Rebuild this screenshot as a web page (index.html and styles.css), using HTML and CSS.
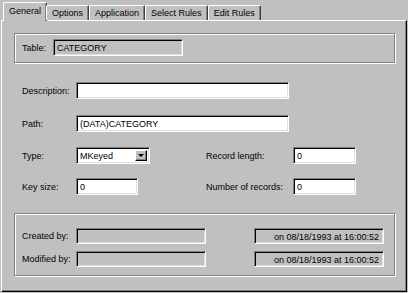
FILE: index.html
```html
<!doctype html>
<html>
<head>
    <title>Table properties</title>
    <link rel="stylesheet" href="styles.css">
</head>
<body>
<div class="dialog">
    <!-- tab strip -->
    <div class="tabs">
        <div class="tab tab-active">General</div>
        <div class="tab">Options</div>
        <div class="tab">Application</div>
        <div class="tab">Select Rules</div>
        <div class="tab">Edit Rules</div>
    </div>

    <div class="panel">
        <div class="group group-table">
            <div class="row">
                <label class="lbl lbl-short">Table:</label>
                <div class="field field-ro field-table">CATEGORY</div>
            </div>
        </div>

        <div class="form">
            <div class="row row-desc">
                <label class="lbl">Description:</label>
                <div class="field field-wide"></div>
            </div>
            <div class="row row-path">
                <label class="lbl">Path:</label>
                <div class="field field-wide">(DATA)CATEGORY</div>
            </div>
            <div class="row row-type">
                <div class="col-left">
                    <label class="lbl">Type:</label>
                    <div class="field combo">
                        <span class="combo-text">MKeyed</span>
                        <span class="combo-btn"><span class="arrow"></span></span>
                    </div>
                </div>
                <label class="lbl lbl-right">Record length:</label>
                <div class="field field-num">0</div>
            </div>
            <div class="row row-key">
                <div class="col-left">
                    <label class="lbl">Key size:</label>
                    <div class="field field-key">0</div>
                </div>
                <label class="lbl lbl-right">Number of records:</label>
                <div class="field field-num">0</div>
            </div>
        </div>

        <div class="group group-audit">
            <div class="row row-created">
                <label class="lbl">Created by:</label>
                <div class="field field-ro field-user"></div>
                <div class="field field-ro field-date">on 08/18/1993 at 16:00:52</div>
            </div>
            <div class="row row-modified">
                <label class="lbl">Modified by:</label>
                <div class="field field-ro field-user"></div>
                <div class="field field-ro field-date">on 08/18/1993 at 16:00:52</div>
            </div>
        </div>
    </div>
</div>
</body>
</html>
```

FILE: styles.css
```css
* { margin: 0; padding: 0; box-sizing: border-box; }
body { background-color: #c0c0c0; font-family: "Liberation Sans", Arial, sans-serif; font-size: 9px; color: #000; }

.dialog { padding: 2px 1px 0 1px; width: 408px; }

/* tabs */
.tabs { display: flex; align-items: flex-end; height: 18px; padding-left: 2px; position: relative; z-index: 1; }
.tab { height: 15px; padding: 2px 5px 0 5px; border: 1px solid #fff; border-right-color: #404040; border-bottom: none; box-shadow: inset -1px 0 #808080; border-radius: 2px 2px 0 0; white-space: nowrap; }
.tab-active { padding: 3px 5px 0 5px; margin-right: -1px; background-color: #c0c0c0; margin-bottom: -1px; height: 19px; }

/* main panel */
.panel { height: 272px; border: 1px solid #fff; border-right-color: #000; border-bottom-color: #000; box-shadow: inset -1px -1px #808080; padding: 12px 11px 0 12px; display: flex; flex-direction: column; }

.group { border: 1px solid #808080; box-shadow: inset 1px 1px #fff, 1px 1px #fff; width: 381px; }
.group-table { height: 30px; padding: 5px 0 0 7px; }
.group-audit { height: 63px; margin-top: 18px; padding: 14px 0 0 7px; }

.form { padding-left: 8px; }
.row { display: flex; align-items: center; height: 17px; }
.row-desc { margin-top: 19px; }
.row-path { margin-top: 16px; }
.row-type { margin-top: 15px; }
.row-key { margin-top: 14px; }
.row-created { height: 16px; }
.row-modified { height: 16px; margin-top: 7px; }

.lbl { width: 54px; white-space: nowrap; }
.lbl-short { width: 31px; }
.lbl-right { width: 87px; }
.col-left { display: flex; align-items: center; width: 184px; }

/* sunken fields */
.field { height: 17px; border: 1px solid; border-color: #808080 #fff #fff #808080; box-shadow: inset 1px 1px #000, inset -1px -1px #dfdfdf; background-color: #fff; padding: 3px 0 0 3px; white-space: nowrap; line-height: 10px; }
.field-ro { background-color: #c0c0c0; }
.field-table { width: 130px; }
.field-wide { width: 213px; }
.field-num { width: 63px; }
.field-key { width: 62px; }
.field-user { width: 130px; height: 16px; }
.field-date { width: 130px; height: 16px; margin-left: 48px; text-align: right; padding: 3px 4px 0 0; }

/* combo box */
.combo { width: 74px; display: flex; justify-content: space-between; padding: 2px 2px 2px 3px; }
.combo-text { padding-top: 1px; }
.combo-btn { width: 12px; height: 11px; background-color: #c0c0c0; border: 1px solid; border-color: #fff #000 #000 #fff; box-shadow: inset -1px -1px #808080; display: flex; align-items: center; justify-content: center; }
.arrow { width: 0; height: 0; border-left: 3px solid transparent; border-right: 3px solid transparent; border-top: 3px solid #000; }
```
